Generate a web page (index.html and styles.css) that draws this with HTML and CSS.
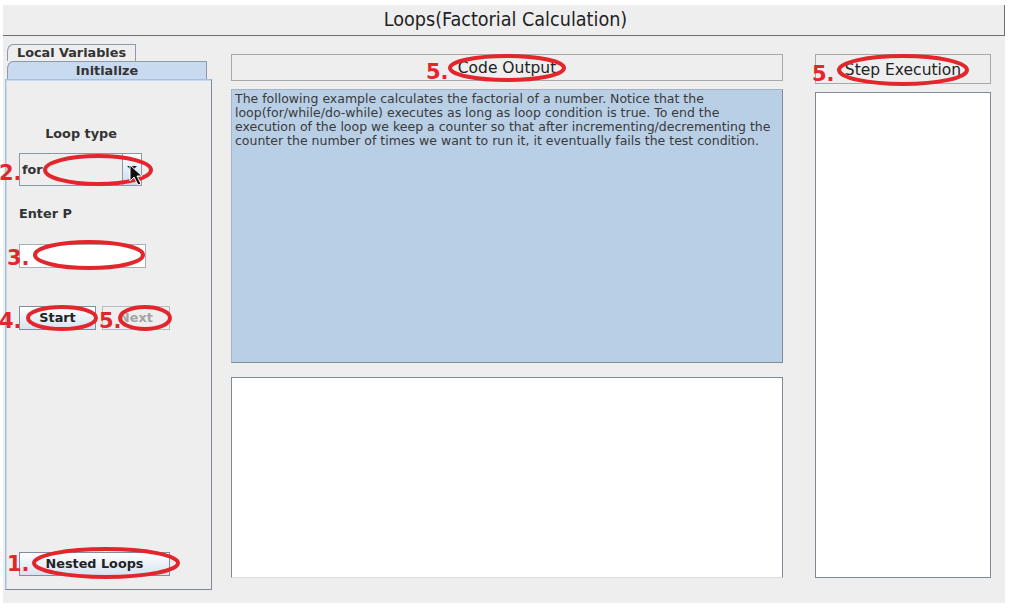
FILE: index.html
```html
<!DOCTYPE html>
<html>
<head>
<meta charset="utf-8">
<link rel="stylesheet" href="styles.css">
</head>
<body>
<div class="app">
  <div class="titlebar">Loops(Factorial Calculation)</div>
  <div class="content">
    <div class="leftcol">
      <div class="tab tab-back">Local Variables</div>
      <div class="tab tab-front">Initialize</div>
      <div class="panel">
        <div class="lbl-center">Loop type</div>
        <div class="combo">
          <span class="combo-text">for</span>
          <span class="combo-btn"><span class="arrow"></span></span>
        </div>
        <div class="lbl">Enter P</div>
        <div class="field"></div>
        <div class="btnrow">
          <div class="btn btn-start">Start</div>
          <div class="btn btn-next">Next</div>
        </div>
        <div class="spacer"></div>
        <div class="btn btn-nested">Nested Loops</div>
      </div>
    </div>
    <div class="midcol">
      <div class="header h-code">Code Output</div>
      <div class="desc">The following example calculates the factorial of a number. Notice that the loop(for/while/do-while) executes as long as loop condition is true. To end the execution of the loop we keep a counter so that after incrementing/decrementing the counter the number of times we want to run it, it eventually fails the test condition.</div>
      <div class="outbox"></div>
    </div>
    <div class="rightcol">
      <div class="header h-step">Step Execution</div>
      <div class="stepbox"></div>
    </div>
  </div>
</div>
<svg class="overlay" width="1013" height="609" viewBox="0 0 1013 609">
  <g fill="none" stroke="#e3262c" stroke-width="4">
    <ellipse cx="507" cy="68" rx="57" ry="12"/>
    <ellipse cx="903" cy="70" rx="64" ry="14"/>
    <ellipse cx="98" cy="170" rx="53" ry="14"/>
    <ellipse cx="89" cy="255" rx="54" ry="13"/>
    <ellipse cx="62" cy="318" rx="34" ry="11"/>
    <ellipse cx="145" cy="318" rx="25" ry="11"/>
    <ellipse cx="106" cy="563" rx="72" ry="14"/>
  </g>
  <g fill="#e3262c" font-family="DejaVu Sans, sans-serif" font-weight="bold" font-size="21">
    <text x="426" y="79">5.</text>
    <text x="812" y="81">5.</text>
    <text x="-1" y="180">2.</text>
    <text x="7" y="265">3.</text>
    <text x="-1" y="328">4.</text>
    <text x="99" y="328">5.</text>
    <text x="7" y="571">1.</text>
  </g>
  <path d="M130 165 L130 181 L134 177 L138 185 L141 184 L137 176 L142 176 Z" fill="#111" stroke="#fff" stroke-width="1"/>
</svg>
</body>
</html>
```
FILE: styles.css
```css
html, body {
  margin: 0;
  padding: 0;
  background: #ffffff;
}
body {
  width: 1013px;
  height: 609px;
  position: relative;
  overflow: hidden;
  font-family: "DejaVu Sans", sans-serif;
  color: #333;
}
.app {
  margin: 5px 0 0 3px;
  width: 1002px;
  height: 598px;
  background: #eeeeee;
  display: flex;
  flex-direction: column;
}
.titlebar {
  height: 30px;
  padding-left: 4px;
  border-right: 1px solid #6f6f6f;
  border-bottom: 1px solid #6f6f6f;
  text-align: center;
  font-family: "DejaVu Sans Condensed", "DejaVu Sans", sans-serif;
  font-size: 19.6px;
  line-height: 30px;
  color: #222;
}
.content {
  display: flex;
  padding-left: 2px;
  padding-top: 8px;
}
.leftcol {
  width: 207px;
  display: flex;
  flex-direction: column;
}
.tab {
  font-weight: bold;
  font-size: 12.8px;
  color: #333;
  text-align: center;
  box-sizing: border-box;
}
.tab-back {
  margin-left: 2px;
  width: 129px;
  height: 17px;
  line-height: 16px;
  border: 1px solid #8d9aa8;
  border-bottom: none;
  border-top-left-radius: 6px 8px;
  background: #eeeeee;
}
.tab-front {
  margin-left: 2px;
  width: 200px;
  height: 18px;
  line-height: 17px;
  border: 1px solid #8d9aa8;
  border-bottom: none;
  border-top-left-radius: 6px 8px;
  background: #c8daef;
}
.panel {
  width: 207px;
  height: 511px;
  box-sizing: border-box;
  border: 1px solid #a8c0da;
  border-right: 1px solid #7c8894;
  border-bottom: 1px solid #7c8894;
  box-shadow: inset 1px 1px 0 #c8daef;
  display: flex;
  flex-direction: column;
  padding-left: 13px;
}
.lbl-center {
  margin-top: 47px;
  width: 150px;
  text-align: center;
  font-weight: bold;
  font-size: 12.8px;
  line-height: 14px;
  margin-left: -13px;
}
.lbl {
  margin-top: 21px;
  font-weight: bold;
  font-size: 12.8px;
  line-height: 14px;
}
.combo {
  margin-top: 12px;
  width: 123px;
  height: 33px;
  box-sizing: border-box;
  border: 1px solid #8a98a6;
  display: flex;
  background: #eeeeee;
}
.combo-text {
  flex: 1;
  font-weight: bold;
  font-size: 12.8px;
  line-height: 31px;
  padding-left: 2px;
}
.combo-btn {
  width: 18px;
  border-left: 1px solid #8a98a6;
  background: linear-gradient(#ffffff, #c9daee);
  display: flex;
  align-items: center;
  justify-content: center;
}
.arrow {
  width: 0;
  height: 0;
  border-left: 5px solid transparent;
  border-right: 5px solid transparent;
  border-top: 5px solid #222;
  margin-top: -2px;
}
.field {
  margin-top: 23px;
  width: 127px;
  height: 24px;
  box-sizing: border-box;
  border: 1px solid #a6aeb6;
  background: #ffffff;
}
.btnrow {
  margin-top: 38px;
  display: flex;
  gap: 6px;
}
.btn {
  box-sizing: border-box;
  height: 24px;
  font-size: 12.8px;
  font-weight: bold;
  line-height: 22px;
  text-align: center;
  border: 1px solid #7e8e9e;
  background: linear-gradient(#ffffff, #d6e3f1);
  color: #222;
}
.btn-start {
  width: 77px;
}
.btn-next {
  width: 68px;
  color: #a4a4a4;
  border-color: #b5bcc4;
  background: #eeeeee;
}
.spacer {
  flex: 1;
}
.btn-nested {
  width: 151px;
  margin-bottom: 13px;
}
.midcol {
  margin-left: 19px;
  margin-top: 10px;
  width: 552px;
  display: flex;
  flex-direction: column;
}
.header {
  box-sizing: border-box;
  border: 1px solid #a9a9a9;
  background: #eeeeee;
  text-align: center;
  font-size: 15.5px;
  color: #222;
}
.h-code {
  height: 27px;
  line-height: 27px;
}
.desc {
  margin-top: 8px;
  height: 274px;
  box-sizing: border-box;
  background: #b8cfe6;
  border: 1px solid #7f8d9b;
  border-top-color: #a4b4c4;
  border-left-color: #a4b4c4;
  padding: 2px 3px;
  font-size: 12.5px;
  line-height: 14px;
  color: #3a3a3a;
}
.outbox {
  margin-top: 14px;
  height: 201px;
  box-sizing: border-box;
  background: #ffffff;
  border: 1px solid #7f8a96;
  border-bottom-color: #d8dde2;
}
.rightcol {
  margin-left: 32px;
  margin-top: 10px;
  width: 176px;
  display: flex;
  flex-direction: column;
}
.h-step {
  height: 30px;
  line-height: 30px;
}
.stepbox {
  margin-top: 8px;
  height: 486px;
  box-sizing: border-box;
  background: #ffffff;
  border: 1px solid #7f8a96;
}
.overlay {
  position: absolute;
  left: 0;
  top: 0;
  pointer-events: none;
}
```
